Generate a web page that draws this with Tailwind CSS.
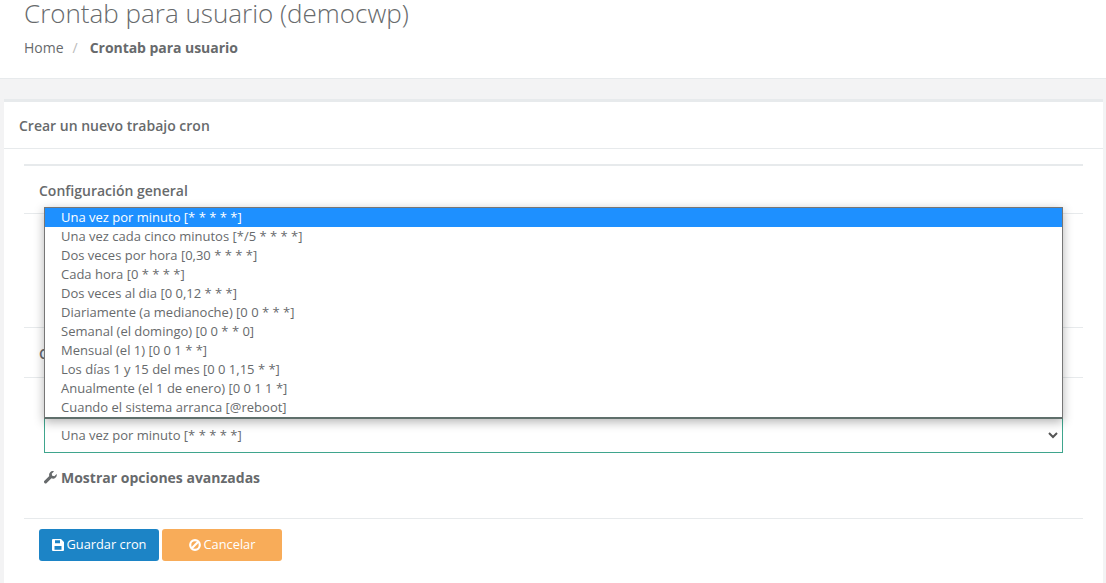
<!DOCTYPE html>
<html lang="es">
<head>
    <meta charset="UTF-8">
    <title>Crontab para usuario</title>
    <script src="https://cdn.jsdelivr.net/npm/@tailwindcss/browser@4"></script>
</head>
<body class="bg-[#f3f3f4] font-['Open_Sans',sans-serif] text-[#676a6c] h-[583px] overflow-hidden">
    <!-- page heading -->
    <div class="bg-white h-[79px] border-b border-[#e7eaec] px-6">
        <h2 class="text-[26px] font-light leading-[26px] whitespace-nowrap">Crontab para usuario (democwp)</h2>
        <div class="flex items-center text-[14px] leading-[20px] mt-[12px]">
            <span>Home</span>
            <span class="text-[#bbb] ml-[9px] mr-[12px]">/</span>
            <strong class="font-bold tracking-[-0.05px]">Crontab para usuario</strong>
        </div>
    </div>

    <!-- card -->
    <div class="mt-[20px] ml-[4px] mr-[3px] bg-white border-t-[3px] border-[#e7eaec] h-[490px] relative">
        <div class="h-[47px] border-b border-[#e7eaec] px-[15px] pt-[1px] flex items-center">
            <h5 class="text-[14px] font-semibold">Crear un nuevo trabajo cron</h5>
        </div>
        <div class="px-[20px] pt-[15px]">
            <div class="border-t-2 border-[#e7eaec]"></div>
            <div class="h-[48px] flex items-center px-[15px] pt-[1px] border-b border-[#e7eaec]">
                <h4 class="text-[14px] font-semibold">Configuración general</h4>
            </div>
            <div class="h-[114px] border-b border-[#e7eaec]"></div>
            <div class="h-[50px] flex items-center px-[15px] pt-px border-b border-[#e7eaec]">
                <h4 class="text-[14px] font-semibold">Configuración</h4>
            </div>
            <div class="pt-[39px] px-[20px]">
                <div class="h-[36px] border border-[#3fa58d] flex items-center justify-between pl-[16px] pr-[4px] text-[13px]">
                    <span class="pt-[2px]">Una vez por minuto [* * * * *]</span>
                    <svg class="w-[10px] h-[7px] text-[#555]" viewBox="0 0 10 7" fill="none" stroke="currentColor" stroke-width="2"><path d="M1 1l4 4 4-4"/></svg>
                </div>
                <div class="flex items-center gap-[4px] mt-[14px] h-[20px] text-[14px] font-bold">
                    <svg class="w-[13px] h-[13px]" viewBox="0 0 16 16" fill="currentColor"><path d="M15.6 3.6l-2.9 2.9-2.6-.6-.6-2.6L12.4.4a4.6 4.6 0 0 0-5.9 5.8L.6 12.1a1.9 1.9 0 0 0 2.7 2.7l5.9-5.9a4.6 4.6 0 0 0 6.4-5.3z"/></svg>
                    <span>Mostrar opciones avanzadas</span>
                </div>
            </div>
            <div class="border-t border-[#e7eaec] mt-[31px]"></div>
            <div class="flex gap-[3px] pl-[15px] pt-[10px]">
                <button class="w-[120px] h-[32px] rounded-[3px] bg-[#1c84c6] text-white text-[12.8px] flex items-center justify-center gap-[3px]">
                    <svg class="w-[12px] h-[12px]" viewBox="0 0 12 12" fill="currentColor"><path fill-rule="evenodd" d="M1 0h8l3 3v8a1 1 0 0 1-1 1H1a1 1 0 0 1-1-1V1a1 1 0 0 1 1-1zm2 1.2v3h5v-3zM2.500 7v3.800h7V7z"/></svg>
                    Guardar cron
                </button>
                <button class="w-[120px] h-[32px] rounded-[3px] bg-[#f8ac59] text-white text-[12.8px] flex items-center justify-center gap-[3px]">
                    <svg class="w-[12px] h-[12px]" viewBox="0 0 12 12" fill="none" stroke="currentColor" stroke-width="2.200"><circle cx="6" cy="6" r="4.800"/><path d="M2.800 9.200l6.400-6.400"/></svg>
                    Cancelar
                </button>
            </div>
        </div>

        <!-- open select list -->
        <ul class="absolute left-[40px] top-[105px] w-[1019px] h-[212px] bg-white border border-[#767676] border-b-2 border-b-[#5f6f6b] shadow-[0_3px_10px_rgba(0,0,0,0.3)] text-[13px] leading-[18px] whitespace-nowrap">
            <li class="h-[19px] pl-[16px] bg-[#1e90ff] text-white">Una vez por minuto [* * * * *]</li>
            <li class="h-[19px] pl-[16px]">Una vez cada cinco minutos [*/5 * * * *]</li>
            <li class="h-[19px] pl-[16px]">Dos veces por hora [0,30 * * * *]</li>
            <li class="h-[19px] pl-[16px]">Cada hora [0 * * * *]</li>
            <li class="h-[19px] pl-[16px]">Dos veces al dia [0 0,12 * * *]</li>
            <li class="h-[19px] pl-[16px]">Diariamente (a medianoche) [0 0 * * *]</li>
            <li class="h-[19px] pl-[16px]">Semanal (el domingo) [0 0 * * 0]</li>
            <li class="h-[19px] pl-[16px]">Mensual (el 1) [0 0 1 * *]</li>
            <li class="h-[19px] pl-[16px]">Los días 1 y 15 del mes [0 0 1,15 * *]</li>
            <li class="h-[19px] pl-[16px]">Anualmente (el 1 de enero) [0 0 1 1 *]</li>
            <li class="h-[19px] pl-[16px]">Cuando el sistema arranca [@reboot]</li>
        </ul>
    </div>
</body>
</html>
